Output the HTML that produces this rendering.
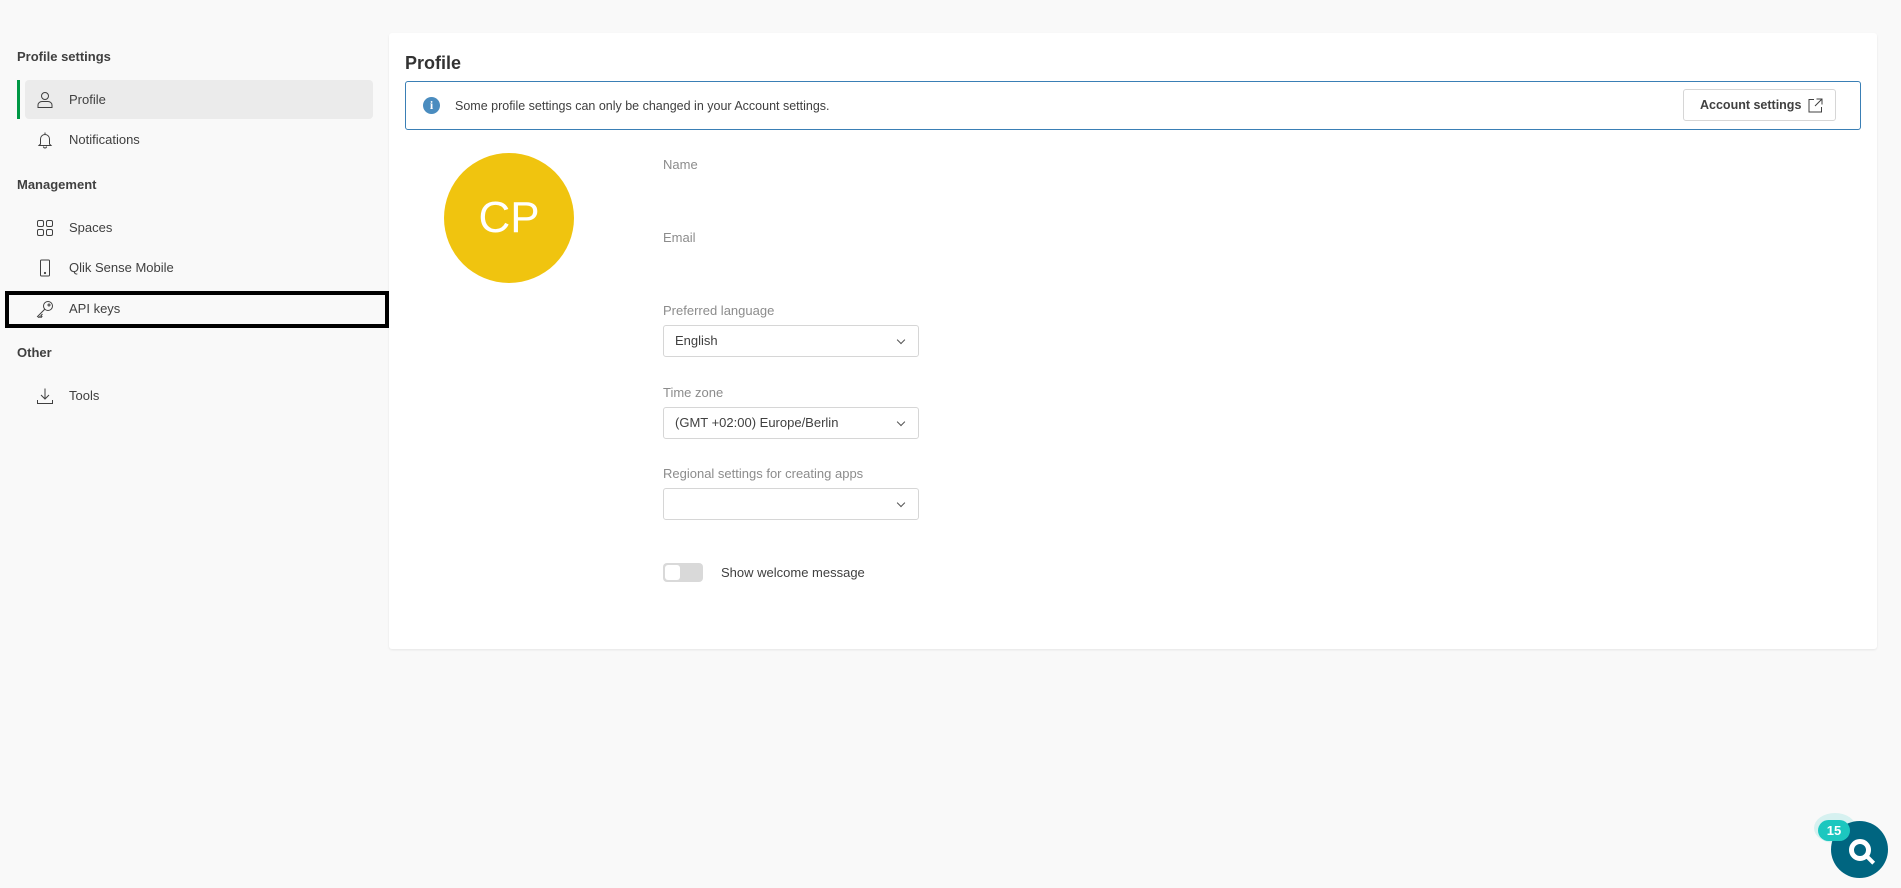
<!DOCTYPE html>
<html><head><meta charset="utf-8"><style>
*{box-sizing:border-box;margin:0;padding:0}
body{width:1901px;height:888px;background:#f9f9f9;font-family:"Liberation Sans",sans-serif;color:#404040;position:relative;overflow:hidden;font-size:13px}
.a{position:absolute}
.h{font-weight:bold;font-size:13px;color:#404040}
.it{position:absolute;left:25px;width:348px;height:39px;display:flex;align-items:center}
.it span{position:absolute;left:44px;font-size:13px;color:#404040}
.it svg{position:absolute;left:11px}
.lbl{position:absolute;left:663px;font-size:13px;color:#8c8c8c}
.sel{position:absolute;left:663px;width:256px;height:32px;background:#fff;border:1px solid #d6d6d6;border-radius:3px;font-size:13px;color:#404040;padding-left:11px;line-height:30px}
.sel:after{content:"";position:absolute;right:14px;top:11px;width:5px;height:5px;border-right:1.3px solid #555;border-bottom:1.3px solid #555;transform:rotate(45deg)}
</style></head><body>
<div class="a h" style="left:17px;top:49px">Profile settings</div>
<div class="a" style="left:17px;top:80px;width:3px;height:39px;background:#009845"></div>
<div class="it" style="top:80px;background:#ebebeb;border-radius:4px"><svg width="18" height="18" viewBox="0 0 18 18" fill="none" stroke="#404040" stroke-width="1"><circle cx="9" cy="5" r="3.5"/><path d="M2 16.5v-2.5c0-2 2-3.5 4-3.5h6c2 0 4 1.5 4 3.5v2.5z"/></svg><span>Profile</span></div>
<div class="it" style="top:120px"><svg width="18" height="18" viewBox="0 0 18 18" fill="none" stroke="#404040" stroke-width="1"><path d="M9 1.5v1.5M4.5 13V8a4.5 4.5 0 0 1 9 0v5l1.5 1.5H3z M7.5 15.5a1.5 1.5 0 0 0 3 0"/></svg><span>Notifications</span></div>
<div class="a h" style="left:17px;top:177px">Management</div>
<div class="it" style="top:208px"><svg width="18" height="18" viewBox="0 0 18 18" fill="none" stroke="#404040" stroke-width="1"><rect x="1.5" y="1.5" width="6" height="6" rx="1.5"/><rect x="10.5" y="1.5" width="6" height="6" rx="1.5"/><rect x="1.5" y="10.5" width="6" height="6" rx="1.5"/><rect x="10.5" y="10.5" width="6" height="6" rx="1.5"/></svg><span>Spaces</span></div>
<div class="it" style="top:248px"><svg width="18" height="18" viewBox="0 0 18 18" fill="none" stroke="#404040" stroke-width="1"><rect x="4.5" y="1" width="9" height="16" rx="1"/><circle cx="9" cy="14" r=".6" fill="#404040"/></svg><span>Qlik Sense Mobile</span></div>
<div class="a" style="left:5px;top:291px;width:384px;height:37px;border:4.5px solid #000"></div>
<div class="it" style="top:289px"><svg width="18" height="18" viewBox="0 0 18 18" fill="none" stroke="#404040" stroke-width="1"><circle cx="12" cy="6" r="4.5"/><circle cx="13" cy="5" r="1"/><path d="M9 9l-7.5 7.5 1.5 1 1-1 1 1 1-1-1-1 1.5-1.5"/></svg><span>API keys</span></div>
<div class="a h" style="left:17px;top:345px">Other</div>
<div class="it" style="top:376px"><svg width="18" height="18" viewBox="0 0 18 18" fill="none" stroke="#404040" stroke-width="1"><path d="M9 1.5v10M5 8l4 4 4-4M1.5 13v3.5h15V13"/></svg><span>Tools</span></div>

<div class="a" style="left:389px;top:33px;width:1488px;height:616px;background:#fff;border-radius:3px;box-shadow:0 1px 2px rgba(0,0,0,.08)"></div>
<div class="a" style="left:405px;top:53px;font-size:18px;font-weight:bold;color:#333">Profile</div>
<div class="a" style="left:405px;top:81px;width:1456px;height:49px;border:1px solid #3a7fb5;border-radius:3px;background:#fff"></div>
<div class="a" style="left:423px;top:97px;width:17px;height:17px;border-radius:50%;background:#4a8cbf;color:#fff;font-size:12px;font-weight:bold;text-align:center;line-height:17px;font-family:'Liberation Serif',serif">i</div>
<div class="a" style="left:455px;top:99px;font-size:12.5px;color:#404040">Some profile settings can only be changed in your Account settings.</div>
<div class="a" style="left:1683px;top:89px;width:153px;height:32px;border:1px solid #d6d6d6;border-radius:3px;background:#fff;font-size:12.5px;font-weight:bold;color:#404040;line-height:30px;padding-left:16px">Account settings
<svg style="position:absolute;right:12px;top:8px" width="15" height="15" viewBox="0 0 15 15" fill="none" stroke="#404040" stroke-width="1"><path d="M6 1.5H1v12.5h12.5V9M8.5 1h5.5v5.5M14 1L7 8"/></svg></div>
<div class="a" style="left:444px;top:153px;width:130px;height:130px;border-radius:50%;background:#f0c40f;color:#fff;font-size:44px;text-align:center;line-height:130px">CP</div>
<div class="lbl" style="top:157px">Name</div>
<div class="lbl" style="top:230px">Email</div>
<div class="lbl" style="top:303px">Preferred language</div>
<div class="sel" style="top:325px">English</div>
<div class="lbl" style="top:385px">Time zone</div>
<div class="sel" style="top:407px">(GMT +02:00) Europe/Berlin</div>
<div class="lbl" style="top:466px">Regional settings for creating apps</div>
<div class="sel" style="top:488px"></div>
<div class="a" style="left:663px;top:563px;width:40px;height:19px;border-radius:4px;background:#d9d9d9"></div>
<div class="a" style="left:665px;top:565px;width:15px;height:15px;border-radius:3px;background:#fff"></div>
<div class="a" style="left:721px;top:565px;font-size:13px;color:#404040">Show welcome message</div>

<div class="a" style="left:1814px;top:813px;width:42px;height:30px;border-radius:50%;background:#d6f1f0"></div>
<div class="a" style="left:1831px;top:821px;width:57px;height:57px;border-radius:50%;background:#006580"></div>
<div class="a" style="left:1849px;top:839px;width:22px;height:22px;border-radius:50%;border:5px solid #fff"></div>
<div class="a" style="left:1866px;top:858px;width:9px;height:4px;background:#fff;transform:rotate(45deg)"></div>
<div class="a" style="left:1818px;top:820px;width:32px;height:21px;border-radius:11px;background:#1cc7bf;color:#fff;font-weight:bold;font-size:13px;text-align:center;line-height:21px">15</div>
</body></html>
